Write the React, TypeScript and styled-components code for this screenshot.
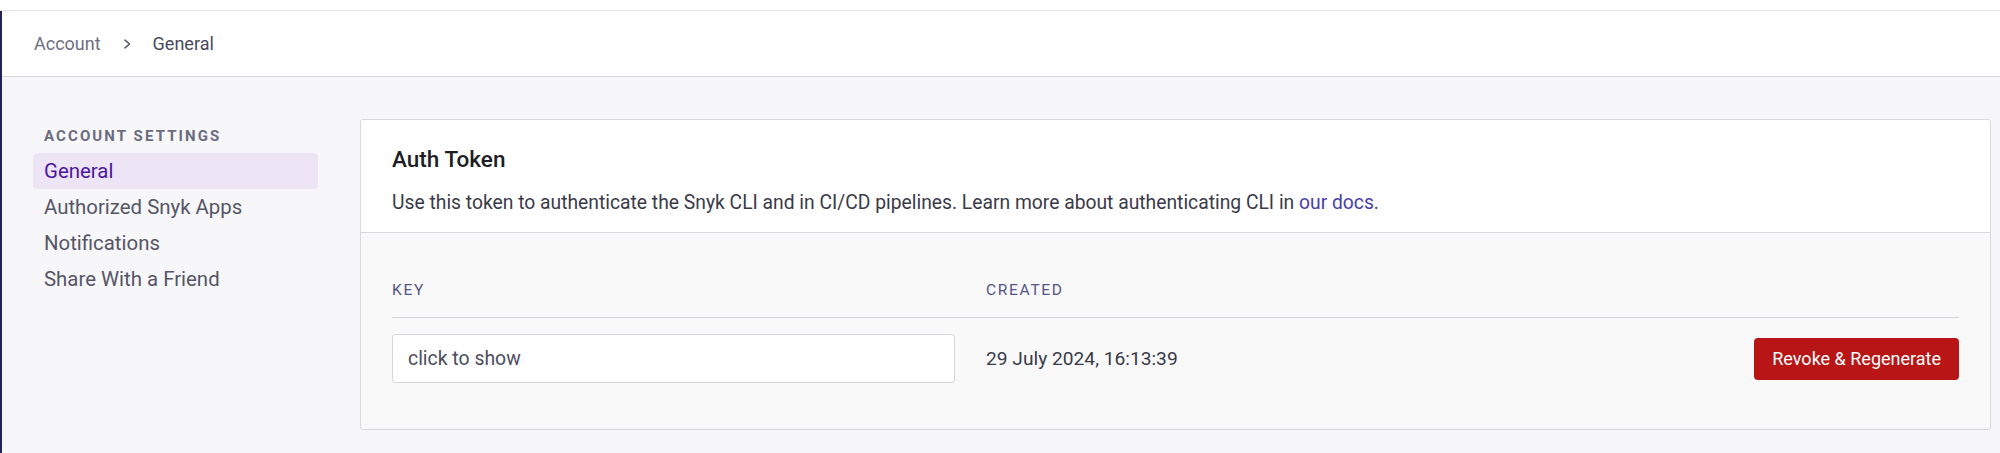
import styled, { createGlobalStyle } from 'styled-components';

const GlobalStyle = createGlobalStyle`
  html, body {
    margin: 0;
    padding: 0;
    height: 100%;
    overflow: hidden;
  }

  body {
    background: #f7f7f9;
    font-family: Roboto, "Liberation Sans", Arial, sans-serif;
    color: #3d3d4d;
  }

  #root {
    height: 100%;
  }
`;

const Page = styled.div`
  height: 100%;
  display: flex;
  flex-direction: column;
`;

const TopStrip = styled.div`
  height: 10px;
  background: #ffffff;
  border-bottom: 1px solid #e3e3e8;
`;

const Frame = styled.div`
  flex: 1;
  display: flex;
`;

const NavEdge = styled.div`
  width: 2px;
  background: #23235a;
  position: relative;
  z-index: 2;
  box-shadow: 4px 0 24px rgba(30, 30, 70, 0.09);
`;

const Content = styled.div`
  flex: 1;
  display: flex;
  flex-direction: column;
`;

const Header = styled.header`
  height: 65px;
  background: #ffffff;
  border-bottom: 1px solid #d9d9df;
  display: flex;
  align-items: center;
  padding-left: 32px;
  font-size: 18px;
  line-height: 24px;
`;

const Crumb = styled.span<{ $current?: boolean }>`
  color: ${(p) => (p.$current ? '#4a4a5c' : '#6e6e80')};
`;

const CrumbSeparator = styled.span`
  display: flex;
  margin: 0 22px 0 23px;
`;

const Body = styled.div`
  display: flex;
  padding: 42px 9px 0 31px;
`;

const Sidebar = styled.nav`
  width: 285px;
  flex-shrink: 0;
  margin-right: 42px;
`;

const SidebarHeading = styled.div`
  margin: 8px 0 8px;
  padding-left: 11px;
  font-size: 15px;
  line-height: 18px;
  font-weight: 700;
  letter-spacing: 2.1px;
  color: #6b6b7e;
`;

const NavItem = styled.a<{ $active?: boolean }>`
  display: block;
  height: 36px;
  line-height: 36px;
  padding-left: 11px;
  border-radius: 4px;
  font-size: 20.4px;
  text-decoration: none;
  color: ${(p) => (p.$active ? '#4b169f' : '#555566')};
  background: ${(p) => (p.$active ? '#ede4f6' : 'transparent')};
`;

const Card = styled.section`
  flex: 1;
  border: 1px solid #d8d8de;
  border-radius: 3px;
  overflow: hidden;
  background: #f9f9fa;
`;

const CardHeader = styled.div`
  background: #ffffff;
  padding: 26px 31px 17px;
  border-bottom: 1px solid #d8d8de;
`;

const CardTitle = styled.h2`
  margin: 0 0 19px;
  font-size: 22.5px;
  line-height: 26px;
  font-weight: 500;
  color: #1d1d26;
`;

const Description = styled.p`
  margin: 0;
  font-size: 19.3px;
  line-height: 24px;
  color: #3a3a48;
`;

const DocsLink = styled.a`
  color: #4a3fa6;
  text-decoration: none;
`;

const CardBody = styled.div`
  padding: 48px 31px 46px;
`;

const TokenGrid = styled.div`
  display: grid;
  grid-template-columns: 594px 1fr auto;
`;

const ColumnLabel = styled.div`
  padding-bottom: 18px;
  border-bottom: 1px solid #d5d5dc;
  font-size: 15.5px;
  line-height: 18px;
  letter-spacing: 1.7px;
  color: #545485;
`;

const Cell = styled.div`
  padding-top: 16px;
  display: flex;
  align-items: center;
`;

const KeyInput = styled.input`
  box-sizing: border-box;
  width: 563px;
  height: 49px;
  padding: 0 15px;
  border: 1px solid #d5d5dc;
  border-radius: 3px;
  background: #ffffff;
  font-family: inherit;
  font-size: 19.4px;
  color: #4d4d5d;
  outline: none;
`;

const CreatedAt = styled.span`
  font-size: 19.2px;
  line-height: 24px;
  color: #3a3a48;
`;

const DangerButton = styled.button`
  height: 42px;
  padding: 0 18px;
  border: none;
  border-radius: 4px;
  background: #b81616;
  color: #ffffff;
  font-family: inherit;
  font-size: 18px;
  cursor: pointer;
`;

const Chevron = () => (
  <svg width="7" height="12" viewBox="0 0 7 12" aria-hidden="true">
    <polyline points="1,2.2 5.6,6 1,9.8" fill="none" stroke="#555a66" strokeWidth="1.6" strokeLinecap="round" strokeLinejoin="round" />
  </svg>
);

const navItems = ['General', 'Authorized Snyk Apps', 'Notifications', 'Share With a Friend'];

export default function App() {
  return (
    <Page>
      <GlobalStyle />
      <TopStrip />
      <Frame>
        <NavEdge />
        <Content>
          <Header>
            <Crumb>Account</Crumb>
            <CrumbSeparator>
              <Chevron />
            </CrumbSeparator>
            <Crumb $current>General</Crumb>
          </Header>

          <Body>
            <Sidebar>
              <SidebarHeading>ACCOUNT SETTINGS</SidebarHeading>
              {navItems.map((item, i) => (
                <NavItem key={item} href="#" $active={i === 0}>
                  {item}
                </NavItem>
              ))}
            </Sidebar>

            <Card>
              <CardHeader>
                <CardTitle>Auth Token</CardTitle>
                <Description>
                  Use this token to authenticate the Snyk CLI and in CI/CD pipelines. Learn more about
                  authenticating CLI in <DocsLink href="#">our docs.</DocsLink>
                </Description>
              </CardHeader>

              <CardBody>
                <TokenGrid>
                  <ColumnLabel>KEY</ColumnLabel>
                  <ColumnLabel>CREATED</ColumnLabel>
                  <ColumnLabel />
                  <Cell>
                    <KeyInput readOnly value="click to show" />
                  </Cell>
                  <Cell>
                    <CreatedAt>29 July 2024, 16:13:39</CreatedAt>
                  </Cell>
                  <Cell>
                    <DangerButton>Revoke &amp; Regenerate</DangerButton>
                  </Cell>
                </TokenGrid>
              </CardBody>
            </Card>
          </Body>
        </Content>
      </Frame>
    </Page>
  );
}
